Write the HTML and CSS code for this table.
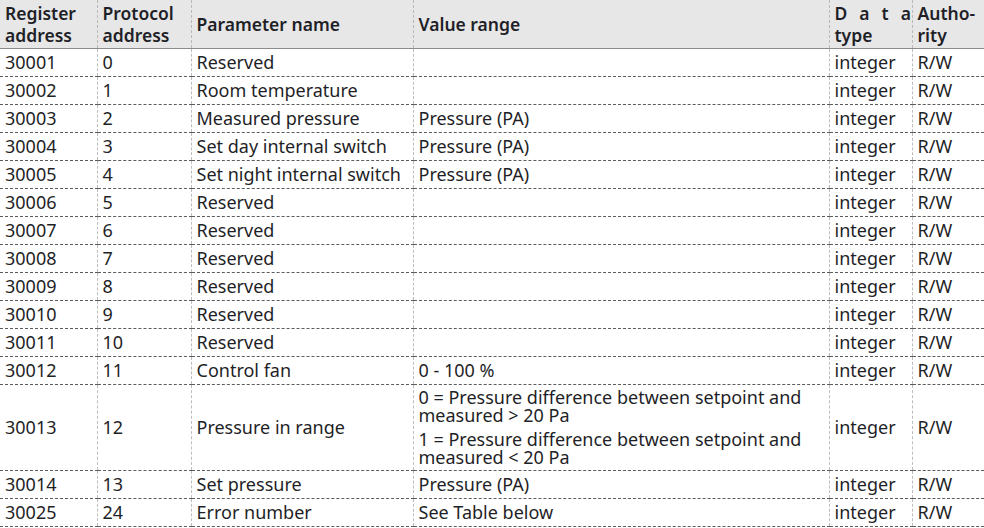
FILE: index.html
```html
<!DOCTYPE html>
<html>
<head>
<meta charset="utf-8">
<link rel="stylesheet" href="styles.css">
</head>
<body>
<table class="regs">
  <colgroup>
    <col class="c1"><col class="c2"><col class="c3"><col class="c4"><col class="c5"><col class="c6">
  </colgroup>
  <thead>
    <tr>
      <th>Register<br>address</th>
      <th>Protocol<br>address</th>
      <th>Parameter name</th>
      <th>Value range</th>
      <th><span class="spread">Dat</span>a<br>type</th>
      <th>Autho-<br>rity</th>
    </tr>
  </thead>
  <tbody>
    <tr><td>30001</td><td>0</td><td>Reserved</td><td></td><td>integer</td><td>R/W</td></tr>
    <tr><td>30002</td><td>1</td><td>Room temperature</td><td></td><td>integer</td><td>R/W</td></tr>
    <tr><td>30003</td><td>2</td><td>Measured pressure</td><td>Pressure (PA)</td><td>integer</td><td>R/W</td></tr>
    <tr><td>30004</td><td>3</td><td>Set day internal switch</td><td>Pressure (PA)</td><td>integer</td><td>R/W</td></tr>
    <tr><td>30005</td><td>4</td><td>Set night internal switch</td><td>Pressure (PA)</td><td>integer</td><td>R/W</td></tr>
    <tr><td>30006</td><td>5</td><td>Reserved</td><td></td><td>integer</td><td>R/W</td></tr>
    <tr><td>30007</td><td>6</td><td>Reserved</td><td></td><td>integer</td><td>R/W</td></tr>
    <tr><td>30008</td><td>7</td><td>Reserved</td><td></td><td>integer</td><td>R/W</td></tr>
    <tr><td>30009</td><td>8</td><td>Reserved</td><td></td><td>integer</td><td>R/W</td></tr>
    <tr><td>30010</td><td>9</td><td>Reserved</td><td></td><td>integer</td><td>R/W</td></tr>
    <tr><td>30011</td><td>10</td><td>Reserved</td><td></td><td>integer</td><td>R/W</td></tr>
    <tr><td>30012</td><td>11</td><td>Control fan</td><td>0 - 100 %</td><td>integer</td><td>R/W</td></tr>
    <tr class="tall">
      <td>30013</td><td>12</td><td>Pressure in range</td>
      <td><p class="para">0 = Pressure difference between setpoint and measured &gt; 20 Pa</p><p class="para">1 = Pressure difference between setpoint and measured &lt; 20 Pa</p></td>
      <td>integer</td><td>R/W</td>
    </tr>
    <tr><td>30014</td><td>13</td><td>Set pressure</td><td>Pressure (PA)</td><td>integer</td><td>R/W</td></tr>
    <tr><td>30025</td><td>24</td><td>Error number</td><td>See Table below</td><td>integer</td><td>R/W</td></tr>
  </tbody>
</table>
</body>
</html>
```
FILE: styles.css
```css
html, body {
  margin: 0;
  padding: 0;
  background: #ffffff;
}
body {
  font-family: "Noto Sans", "Open Sans", sans-serif;
  color: #1f1f27;
}
.regs {
  width: 984px;
  table-layout: fixed;
  border-collapse: collapse;
  font-size: 18px;
}
.c1 { width: 97px; }
.c2 { width: 94px; }
.c3 { width: 222px; }
.c4 { width: 416px; }
.c5 { width: 83px; }
.c6 { width: 72px; }
.regs th {
  background: #e7e7e7;
  font-weight: 600;
  font-size: 17.5px;
  text-align: left;
  vertical-align: middle;
  height: 48px;
  padding: 0 5px;
  line-height: 22px;
  box-sizing: border-box;
  border-left: 1px dashed #b9b9b9;
  border-bottom: 1.5px solid #8c8c8c;
  white-space: nowrap;
}
.regs th:first-child, .regs td:first-child { border-left: none; }
.spread { letter-spacing: 12px; }
.regs td {
  height: 28px;
  padding: 0 5px;
  line-height: 20px;
  vertical-align: middle;
  box-sizing: border-box;
  border-left: 1px dashed #bdbdbd;
  border-bottom: 1px dashed #5c5c5c;
  white-space: nowrap;
}
.regs tr.tall td {
  height: 86px;
  white-space: normal;
  padding-top: 2px;
  padding-bottom: 2px;
}
.para {
  margin: 0;
  line-height: 18.5px;
}
.para + .para { margin-top: 5px; }
```
